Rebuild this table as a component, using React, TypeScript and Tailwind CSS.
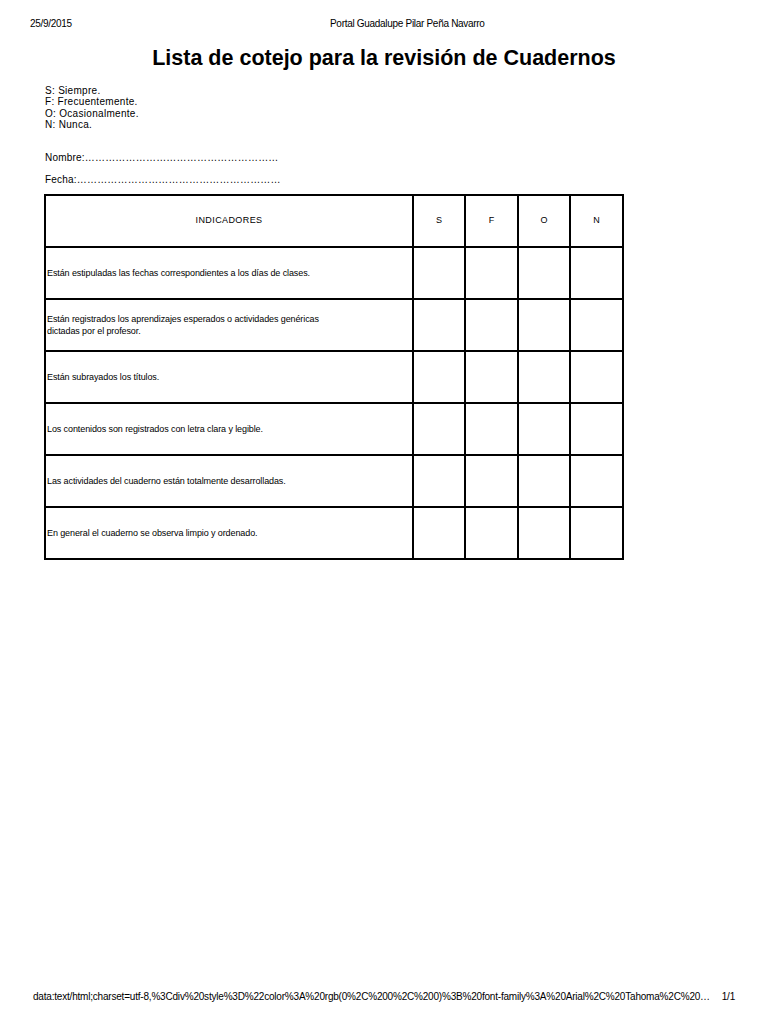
import React from 'react';

const indicadores = [
  'Están estipuladas las fechas correspondientes a los días de clases.',
  'Están registrados los aprendizajes esperados o actividades genéricas dictadas por el profesor.',
  'Están subrayados los títulos.',
  'Los contenidos son registrados con letra clara y legible.',
  'Las actividades del cuaderno están totalmente desarrolladas.',
  'En general el cuaderno se observa limpio y ordenado.',
];

const escala = ['S', 'F', 'O', 'N'];

const App = () => {
  return (
    <div className="w-[768px] h-[1024px] bg-white text-black flex flex-col font-['Liberation_Sans',Arial,sans-serif]">
      {/* cabecera de impresion */}
      <div className="flex px-[30px] pt-[18px] text-[10px] tracking-[-0.3px] leading-[12px]">
        <div className="w-[300px]">25/9/2015</div>
        <div>Portal Guadalupe Pilar Peña Navarro</div>
      </div>

      <h1 className="text-center text-[21.5px] font-bold leading-[26px] mt-[15px]">
        Lista de cotejo para la revisión de Cuadernos
      </h1>

      <div className="pl-[45px] mt-[14px] text-[10px] leading-[11.3px] tracking-[0.3px]">
        <div>S: Siempre.</div>
        <div>F: Frecuentemente.</div>
        <div>O: Ocasionalmente.</div>
        <div>N: Nunca.</div>
      </div>

      <div className="pl-[45px] mt-[22px] text-[10px] leading-[12px] tracking-[0.2px]">
        <div>Nombre:…………………………………………………</div>
        <div className="mt-[10px]">Fecha:……………………………………………………</div>
      </div>

      <table className="ml-[44px] mt-[8px] w-[578px] table-fixed border-collapse border-2 border-black text-[9px] tracking-[-0.1px]">
        <colgroup>
          <col className="w-[368px]" />
          <col className="w-[52px]" />
          <col className="w-[53px]" />
          <col className="w-[52px]" />
          <col className="w-[53px]" />
        </colgroup>
        <thead>
          <tr className="h-[52px]">
            <th className="border-2 border-black font-normal text-center tracking-[0.4px]">INDICADORES</th>
            {escala.map((e) => (
              <th key={e} className="border-2 border-black font-normal text-center">
                {e}
              </th>
            ))}
          </tr>
        </thead>
        <tbody>
          {indicadores.map((txt, i) => (
            <tr key={i} className="h-[52px]">
              <td className="border-2 border-black text-left pl-[1px] pr-[72px] leading-[12px]">{txt}</td>
              {escala.map((e) => (
                <td key={e} className="border-2 border-black" />
              ))}
            </tr>
          ))}
        </tbody>
      </table>

      <div className="flex-1" />

      {/* pie de impresion */}
      <div className="flex items-center px-[33px] pb-[21px] text-[10px] tracking-[-0.2px] leading-[12px]">
        <div className="whitespace-nowrap">
          data:text/html;charset=utf-8,%3Cdiv%20style%3D%22color%3A%20rgb(0%2C%200%2C%200)%3B%20font-family%3A%20Arial%2C%20Tahoma%2C%20…
        </div>
        <div className="ml-auto">1/1</div>
      </div>
    </div>
  );
};

export default App;
